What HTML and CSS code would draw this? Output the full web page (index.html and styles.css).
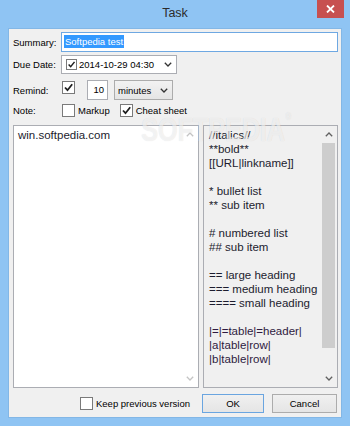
FILE: index.html
```html
<!DOCTYPE html>
<html lang="en">
<head>
    <meta charset="UTF-8">
    <meta name="viewport" content="width=device-width, initial-scale=1.0">
    <title>Task</title>
    <link rel="stylesheet" href="styles.css">
</head>
<body>

    <div class="window">
        <div class="titlebar">
            <span></span>
            <span class="title">Task</span>
            <span class="close-wrap">
                <span class="close">
                    <svg width="9" height="8" viewBox="0 0 9 8"><path d="M1 0.5 L8 7.5 M8 0.5 L1 7.5" stroke="#fff" stroke-width="1.8" fill="none"/></svg>
                </span>
            </span>
        </div>

        <div class="client">
            <div class="row row-summary">
                <span class="lbl">Summary:</span>
                <div class="textbox focused"><span class="sel">Softpedia test</span></div>
            </div>

            <div class="row row-date">
                <span class="lbl">Due Date:</span>
                <div class="datepicker">
                    <span class="cb small checked">
                        <svg width="9" height="9" viewBox="0 0 11 11"><path d="M2 5.5 L4.5 8.2 L9.2 2.3" stroke="#1e1e1e" stroke-width="1.8" fill="none"/></svg>
                    </span>
                    <span class="date-text">2014-10-29 04:30</span>
                    <svg class="chevron" width="8" height="5" viewBox="0 0 8 5"><path d="M0.8 0.8 L4 4 L7.2 0.8" stroke="#333" stroke-width="1.3" fill="none"/></svg>
                </div>
            </div>

            <div class="row row-remind">
                <span class="lbl">Remind:</span>
                <span class="cb checked">
                    <svg width="11" height="11" viewBox="0 0 11 11"><path d="M2 5.5 L4.5 8.2 L9.2 2.3" stroke="#1e1e1e" stroke-width="1.8" fill="none"/></svg>
                </span>
                <div class="spin">10</div>
                <div class="combo">
                    <span>minutes</span>
                    <svg class="chevron" width="8" height="5" viewBox="0 0 8 5"><path d="M0.8 0.8 L4 4 L7.2 0.8" stroke="#333" stroke-width="1.3" fill="none"/></svg>
                </div>
            </div>

            <div class="row row-note">
                <span class="lbl">Note:</span>
                <span class="cb"></span>
                <span class="cb-text">Markup</span>
                <span class="cb checked cheat">
                    <svg width="11" height="11" viewBox="0 0 11 11"><path d="M2 5.5 L4.5 8.2 L9.2 2.3" stroke="#1e1e1e" stroke-width="1.8" fill="none"/></svg>
                </span>
                <span class="cb-text">Cheat sheet</span>
            </div>

            <div class="row row-boxes">
                <div class="box note-box">
                    <div class="box-text">win.softpedia.com</div>
                    <div class="scroll disabled">
                        <span class="arrow"><svg width="8" height="5" viewBox="0 0 8 5"><path d="M0.8 4.2 L4 1 L7.2 4.2" stroke="#c4c4c4" stroke-width="1.3" fill="none"/></svg></span>
                        <span class="track"></span>
                        <span class="arrow"><svg width="8" height="5" viewBox="0 0 8 5"><path d="M0.8 0.8 L4 4 L7.2 0.8" stroke="#c4c4c4" stroke-width="1.3" fill="none"/></svg></span>
                    </div>
                </div>
                <div class="box sheet-box">
                    <div class="box-text">//italics//<br>**bold**<br>[[URL|linkname]]<br><br>* bullet list<br>** sub item<br><br># numbered list<br>## sub item<br><br>== large heading<br>=== medium heading<br>==== small heading<br><br><span class="tbl">|=|=table|=header|<br>|a|table|row|<br>|b|table|row|</span></div>
                    <div class="scroll">
                        <span class="arrow"><svg width="8" height="5" viewBox="0 0 8 5"><path d="M0.8 4.2 L4 1 L7.2 4.2" stroke="#606060" stroke-width="1.3" fill="none"/></svg></span>
                        <span class="thumb"></span>
                        <span class="track"></span>
                        <span class="arrow"><svg width="8" height="5" viewBox="0 0 8 5"><path d="M0.8 0.8 L4 4 L7.2 0.8" stroke="#606060" stroke-width="1.3" fill="none"/></svg></span>
                    </div>
                </div>
            </div>

            <div class="row row-buttons">
                <span class="cb"></span>
                <span class="cb-text keep">Keep previous version</span>
                <button class="btn default">OK</button>
                <button class="btn">Cancel</button>
            </div>

            <div class="watermark">SOFTPEDIA<sup>®</sup></div>
        </div>
    </div>

</body>
</html>
```

FILE: styles.css
```css
* {
    box-sizing: border-box;
}

body {
    margin: 0;
    font-family: "Liberation Sans", Arial, sans-serif;
    color: #000;
}

.window {
    width: 350px;
    height: 426px;
    background-color: #8fc4f3;
    padding: 0 8px 8px;
    display: flex;
    flex-direction: column;
}

/* title bar */
.titlebar {
    height: 28px;
    margin: 0 -8px;
    display: grid;
    grid-template-columns: 1fr auto 1fr;
}

.title {
    font-size: 12.5px;
    line-height: 27px;
    color: #2b2b2b;
}

.close-wrap {
    display: flex;
    justify-content: flex-end;
    padding-right: 6px;
}

.close {
    width: 27px;
    height: 18px;
    background-color: #c75050;
    display: flex;
    align-items: center;
    justify-content: center;
}

/* dialog body */
.client {
    position: relative;
    flex: 1;
    background-color: #f0f0f0;
    border: 1px solid #83b7e6;
    padding: 3px 3px 4px 4px;
    display: flex;
    flex-direction: column;
    overflow: hidden;
}

.row {
    display: flex;
    align-items: center;
    font-size: 9.5px;
}

.lbl {
    width: 48px;
    flex-shrink: 0;
}

.row-summary {
    height: 20px;
}

.row-date {
    height: 19px;
    margin-top: 3px;
}

.row-remind {
    height: 20px;
    margin-top: 6px;
}

.row-note {
    height: 13px;
    margin-top: 4px;
}

.row-boxes {
    height: 263px;
    margin-top: 8px;
    align-items: stretch;
    gap: 4px;
}

.row-buttons {
    height: 19px;
    margin-top: 6px;
    justify-content: flex-end;
    padding-right: 1px;
}

/* inputs */
.textbox {
    flex: 1;
    height: 20px;
    background-color: #fff;
    border: 1px solid #abadb3;
    padding: 2px 0 0 2px;
}

.textbox.focused {
    border-color: #6ea8e2;
}

.sel {
    display: inline-block;
    background-color: #3399ff;
    color: #fff;
    line-height: 13px;
    padding: 0 1px;
}

.datepicker {
    width: 116px;
    height: 19px;
    background-color: #fff;
    border: 1px solid #abadb3;
    display: flex;
    align-items: center;
    padding: 0 4px 0 4px;
}

.date-text {
    margin-left: 2px;
    flex: 1;
}

.cb {
    width: 13px;
    height: 13px;
    flex-shrink: 0;
    border: 1px solid #7a7a7a;
    background-color: #fff;
    display: inline-flex;
    align-items: center;
    justify-content: center;
    margin-left: 1px;
}

.cb.small {
    width: 11px;
    height: 11px;
    margin-left: 0;
}

.row-remind .cb {
    align-self: flex-start;
    margin-top: 1px;
}

.cb-text {
    margin-left: 3px;
}

.cheat {
    margin-left: 10px;
}

.spin {
    width: 21px;
    height: 20px;
    margin-left: 12px;
    background-color: #fff;
    border: 1px solid #abadb3;
    text-align: right;
    padding: 3px 3px 0 0;
}

.combo {
    width: 59px;
    height: 20px;
    margin-left: 6px;
    background: linear-gradient(#f2f2f2, #e5e5e5);
    border: 1px solid #acacac;
    display: flex;
    align-items: center;
    justify-content: space-between;
    padding: 0 4px 0 3px;
}

/* note + cheat sheet */
.box {
    border: 1px solid #abadb3;
    display: flex;
}

.note-box {
    width: 186px;
    background-color: #fff;
}

.sheet-box {
    width: 135px;
    background-color: #f0f0f0;
}

.box-text {
    flex: 1;
    font-size: 11.5px;
    line-height: 14px;
    color: #1c1c2e;
    padding: 2px 0 0 4px;
    white-space: nowrap;
}

.sheet-box .box-text {
    padding-left: 5px;
}

.tbl {
    color: #2e1a40;
}

.scroll {
    width: 17px;
    display: flex;
    flex-direction: column;
    align-items: center;
}

.arrow {
    height: 17px;
    display: flex;
    align-items: center;
    justify-content: center;
}

.thumb {
    width: 13px;
    height: 205px;
    background-color: #cdcdcd;
}

.track {
    flex: 1;
}

/* bottom buttons */
.keep {
    margin-right: 12px;
}

.btn {
    font-family: inherit;
    font-size: 9.5px;
    height: 19px;
    background: linear-gradient(#f0f0f0, #e5e5e5);
    border: 1px solid #acacac;
    color: #000;
    padding: 0;
}

.btn.default {
    width: 62px;
    border-color: #6aa5e0;
}

.btn + .btn {
    width: 65px;
    margin-left: 8px;
}

.watermark {
    position: absolute;
    left: 132px;
    top: 82px;
    font-size: 33px;
    font-weight: bold;
    letter-spacing: -0.5px;
    color: rgba(255, 255, 255, 0.6);
    text-shadow: 0 0 1px rgba(0, 0, 0, 0.12);
    transform: scaleX(0.78);
    transform-origin: left top;
    pointer-events: none;
}

.watermark sup {
    font-size: 10px;
    vertical-align: top;
    margin-left: 1px;
}
```
